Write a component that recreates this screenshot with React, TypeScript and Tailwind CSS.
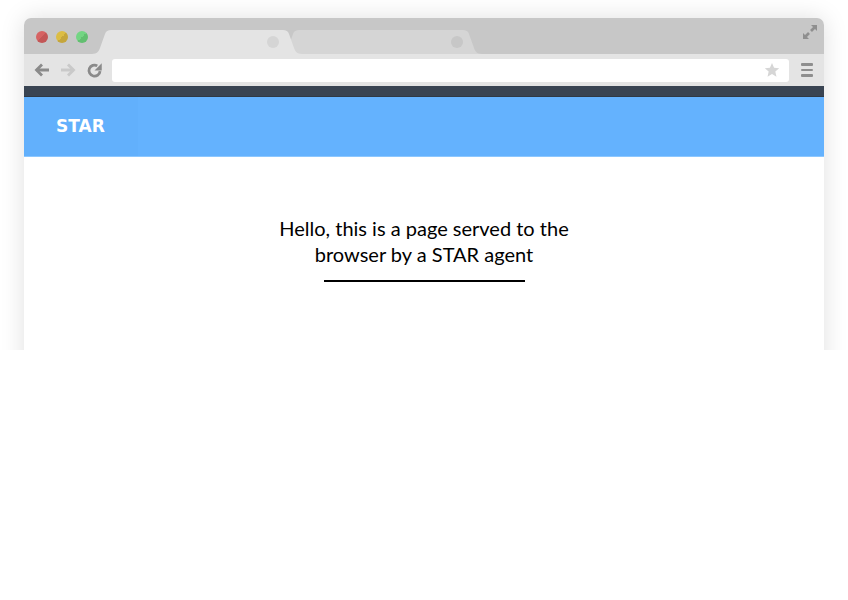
import React from "react";

function TabShape({ w, fill, className }: { w: number; fill: string; className?: string }) {
  const h = 24;
  const d = `M0,${h} C5,${h} 7,${h - 3} 8,${h - 6} L13,4 C14,1 16,0 19,0 L${w - 19},0 C${w - 16},0 ${w - 14},1 ${w - 13},4 L${w - 8},${h - 6} C${w - 7},${h - 3} ${w - 5},${h} ${w},${h} Z`;
  return (
    <svg width={w} height={h} viewBox={`0 0 ${w} ${h}`} className={className}>
      <path d={d} fill={fill} />
    </svg>
  );
}

function Light({ a, b }: { a: string; b: string }) {
  return (
    <div
      className="w-[12px] h-[12px] rounded-full"
      style={{ background: `linear-gradient(135deg, ${a} 50%, ${b} 50%)` }}
    />
  );
}

export default function App() {
  return (
    <div className="w-[848px] h-[600px] bg-white">
      <div className="w-[848px] h-[350px] overflow-hidden pt-[18px] px-[24px]">
        <div className="w-[800px] h-[400px] rounded-t-[7px] bg-white shadow-[0_0_24px_rgba(0,0,0,0.13)] overflow-hidden flex flex-col">
          {/* title bar */}
          <div className="h-[36px] bg-[#c7c7c7] flex items-end relative">
            <div className="absolute left-[12px] top-[13px] flex gap-[8px]">
              <Light a="#d66363" b="#c35757" />
              <Light a="#dcbd44" b="#c5a63c" />
              <Light a="#73d583" b="#62bf70" />
            </div>
            <div className="absolute left-[256px] top-[12px]">
              <div className="relative">
                <TabShape w={202} fill="#d5d5d5" />
                <div className="absolute right-[19px] top-[6px] w-[12px] h-[12px] rounded-full bg-[#c7c7c7]" />
              </div>
            </div>
            <div className="absolute left-[68px] top-[12px]">
              <div className="relative">
                <TabShape w={210} fill="#e4e4e4" />
                <div className="absolute right-[23px] top-[6px] w-[12px] h-[12px] rounded-full bg-[#d5d5d5]" />
              </div>
            </div>
            <svg className="absolute right-[6px] top-[6px]" width="16" height="16" viewBox="0 0 16 16">
              <g fill="#8f8f8f">
                <polygon points="15,1 15,7 9,1" />
                <polygon points="1,15 1,9 7,15" />
              </g>
              <g stroke="#8f8f8f" strokeWidth="2.6">
                <line x1="13" y1="3" x2="9" y2="7" />
                <line x1="3" y1="13" x2="7" y2="9" />
              </g>
            </svg>
          </div>
          {/* toolbar */}
          <div className="h-[32px] bg-[#e4e4e4] flex items-center">
            <div className="w-[88px] flex items-center pl-[10px] gap-[10px]">
              <svg width="16" height="16" viewBox="0 0 16 16">
                <g stroke="#8a8a8a" strokeWidth="2.8" fill="none" strokeLinecap="butt" strokeLinejoin="miter">
                  <line x1="2.5" y1="8" x2="15" y2="8" />
                  <polyline points="8,2.5 2.5,8 8,13.5" />
                </g>
              </svg>
              <svg width="16" height="16" viewBox="0 0 16 16">
                <g stroke="#c9c9c9" strokeWidth="2.8" fill="none">
                  <line x1="1" y1="8" x2="13.5" y2="8" />
                  <polyline points="8,2.5 13.5,8 8,13.5" />
                </g>
              </svg>
              <svg width="17" height="17" viewBox="0 0 16 16">
                <path d="M13.2 8.5 A5.2 5.2 0 1 1 10.6 3.6" stroke="#8a8a8a" strokeWidth="2.6" fill="none" />
                <polygon points="14.8,1.2 14.8,8 8,8" fill="#8a8a8a" />
              </svg>
            </div>
            <div className="w-[677px] h-[23px] bg-white rounded-[3px] flex items-center justify-end pr-[9px]">
              <svg width="16" height="16" viewBox="0 0 24 24">
                <polygon
                  points="12,1.5 15.1,8.6 22.8,9.3 17,14.4 18.7,22 12,18 5.3,22 7,14.4 1.2,9.3 8.9,8.6"
                  fill="#d6d6d6"
                />
              </svg>
            </div>
            <div className="flex-1 flex justify-center">
              <div className="flex flex-col gap-[3px]">
                <div className="w-[12px] h-[2.5px] bg-[#8e8e8e] rounded-[1px]" />
                <div className="w-[12px] h-[2.5px] bg-[#8e8e8e] rounded-[1px]" />
                <div className="w-[12px] h-[2.5px] bg-[#8e8e8e] rounded-[1px]" />
              </div>
            </div>
          </div>
          {/* dark strip */}
          <div className="h-[11px] bg-[#394452] border-b border-[#2f3945]" />
          {/* blue header */}
          <div className="h-[60px] bg-[#64b2fe] border-b border-[#8cc7ff] flex items-center">
            <div className="h-full w-[114px] flex items-center pl-[32px] bg-[#62b0fc]">
              <span className="text-white font-bold text-[17px] leading-none" style={{ fontFamily: '"DejaVu Sans", Verdana, sans-serif' }}>
                STAR
              </span>
            </div>
          </div>
          {/* content */}
          <div className="flex-1 bg-white flex flex-col items-center pt-[58px]">
            <p
              className="text-center text-black text-[20px] leading-[26px] w-[320px]"
              style={{ fontFamily: 'Lato, "Noto Sans", sans-serif' }}
            >
              Hello, this is a page served to the browser by a STAR agent
            </p>
            <div className="mt-[13px] w-[201px] h-[2px] bg-black" />
          </div>
        </div>
      </div>
    </div>
  );
}
